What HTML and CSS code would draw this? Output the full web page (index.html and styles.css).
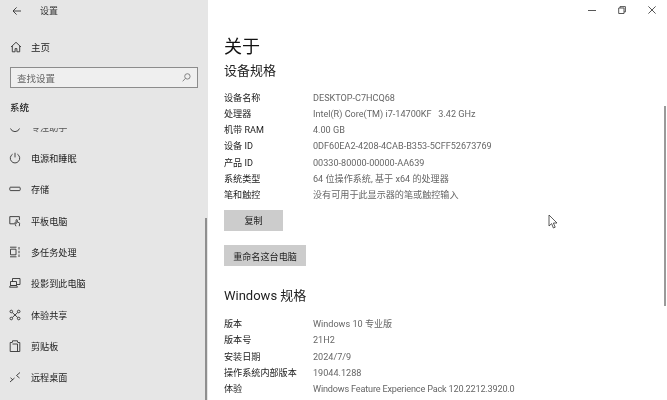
FILE: index.html
```html
<!DOCTYPE html>
<html lang="zh-CN">
<head>
<meta charset="utf-8">
<title>设置</title>
<link rel="stylesheet" href="styles.css">
</head>
<body>
<div class="window">
  <aside class="sidebar">
    <div class="titlebar">
      <svg class="back" width="10" height="10" viewBox="0 0 10 10"><path d="M9 5H1M4.600 1.400 1 5l3.600 3.600"/></svg>
      <span class="title">设置</span>
    </div>
    <div class="home">
      <svg class="icon" width="12" height="12" viewBox="0 0 12 12"><path d="M1 6 6 1.300 11 6M2.300 5v5.800h2.800V7.600h1.800v3.200h2.800V5"/></svg>
      <span>主页</span>
    </div>
    <div class="search">
      <span>查找设置</span>
      <svg class="icon" width="9" height="9" viewBox="0 0 9 9"><circle cx="5.400" cy="3.400" r="2.700"/><path d="M3.400 5.400.7 8.300"/></svg>
    </div>
    <div class="group">系统</div>
    <nav class="nav">
      <div class="clip">
        <svg class="icon" width="12" height="5" viewBox="0 0 12 5"><path d="M1.500 .5a4.800 4.800 0 0 0 9 0"/></svg>
        <span>专注助手</span>
      </div>
      <div class="item">
        <svg class="icon" width="12" height="12" viewBox="0 0 12 12"><path d="M3.600 2.200a4.700 4.700 0 1 0 4.800 0M6 .8v4.600"/></svg>
        <span>电源和睡眠</span>
      </div>
      <div class="item">
        <svg class="icon" width="12" height="12" viewBox="0 0 12 12"><rect x=".8" y="4.200" width="10.400" height="3.400" rx=".8"/></svg>
        <span>存储</span>
      </div>
      <div class="item">
        <svg class="icon" width="12" height="12" viewBox="0 0 12 12"><path d="M5 8.800H.8V1.600h9.600V5"/><path d="M7 11.200 5.600 8.400c-.3-.7.5-1 .9-.5l.6.8V5.200c0-.8 1.200-.8 1.200 0v2l1.600.4c.5.1.7.4.7.9l-.3 2.700"/></svg>
        <span>平板电脑</span>
      </div>
      <div class="item">
        <svg class="icon" width="12" height="12" viewBox="0 0 12 12"><path d="M1 1.200h6.500M1 10.800h6.500M1.500 3.200h5.500v5.600H1.500zM10 1v2.500M10 4.800v2.400M10 8.500V11"/></svg>
        <span>多任务处理</span>
      </div>
      <div class="item">
        <svg class="icon" width="12" height="12" viewBox="0 0 12 12"><path d="M3.500 4.500V1.500h7.500v6H8M1.500 4.500h6v4h-6zM.5 10.200h8l-1-1.700h-6z"/></svg>
        <span>投影到此电脑</span>
      </div>
      <div class="item">
        <svg class="icon" width="12" height="12" viewBox="0 0 12 12"><circle cx="2.300" cy="2.500" r="1.300"/><circle cx="9.700" cy="2.500" r="1.300"/><circle cx="2.300" cy="9.500" r="1.300"/><circle cx="9.700" cy="9.500" r="1.300"/><path d="M3.300 3.500 8.700 8.500M8.700 3.500 3.300 8.500"/></svg>
        <span>体验共享</span>
      </div>
      <div class="item">
        <svg class="icon" width="12" height="12" viewBox="0 0 12 12"><path d="M3 2.500H1.200v9h9.600v-9H9M3.500 2.500V.8h5v1.700M3.500 4h5v7.500"/></svg>
        <span>剪贴板</span>
      </div>
      <div class="item">
        <svg class="icon" width="12" height="12" viewBox="0 0 12 12"><path d="M1 11 5.500 7M1.500 6.800 4 9M11 1.500 7.500 4.500 10.500 7"/></svg>
        <span>远程桌面</span>
      </div>
    </nav>
    <div class="sidebar-thumb"></div>
  </aside>
  <main class="content">
    <div class="controls">
      <svg width="8" height="8" viewBox="0 0 8 8"><path d="M0 4.500h8"/></svg>
      <svg width="8" height="8" viewBox="0 0 8 8"><path d="M.7 2h5.300v5.500H.7zM2 2V.6h5.400v5.300H6"/></svg>
      <svg width="8" height="8" viewBox="0 0 8 8"><path d="M.4.400l7.200 7.200M7.600.400.4 7.600"/></svg>
    </div>
    <h1>关于</h1>
    <h2>设备规格</h2>
    <dl class="specs">
      <dt>设备名称</dt><dd>DESKTOP-C7HCQ68</dd>
      <dt>处理器</dt><dd>Intel(R) Core(TM) i7-14700KF&nbsp;&nbsp; 3.42 GHz</dd>
      <dt>机带 RAM</dt><dd>4.00 GB</dd>
      <dt>设备 ID</dt><dd>0DF60EA2-4208-4CAB-B353-5CFF52673769</dd>
      <dt>产品 ID</dt><dd>00330-80000-00000-AA639</dd>
      <dt>系统类型</dt><dd>64 位操作系统, 基于 x64 的处理器</dd>
      <dt>笔和触控</dt><dd>没有可用于此显示器的笔或触控输入</dd>
    </dl>
    <button class="btn copy">复制</button>
    <button class="btn rename">重命名这台电脑</button>
    <h2 class="win">Windows 规格</h2>
    <dl class="specs second">
      <dt>版本</dt><dd>Windows 10 专业版</dd>
      <dt>版本号</dt><dd>21H2</dd>
      <dt>安装日期</dt><dd>2024/7/9</dd>
      <dt>操作系统内部版本</dt><dd>19044.1288</dd>
      <dt>体验</dt><dd class="pack">Windows Feature Experience Pack 120.2212.3920.0</dd>
    </dl>
    <div class="main-thumb"></div>
    <svg class="cursor" width="10" height="15" viewBox="0 0 10 15"><path d="M1 1v11l2.600-2.400L5.400 14l1.800-.8-1.800-4.200H9z"/></svg>
  </main>
</div>
</body>
</html>
```

FILE: styles.css
```css
* { box-sizing: border-box; }
html, body { margin: 0; height: 100%; }
body {
  font-family: Roboto, "Noto Sans CJK SC", sans-serif;
  font-size: 9.1px;
  color: #222;
  overflow: hidden;
}
.window { display: flex; width: 667px; height: 400px; overflow: hidden; filter: blur(.3px); }
.sidebar {
  position: relative;
  flex: 0 0 208px;
  height: 400px;
  background: #e6e6e6;
  overflow: hidden;
}
svg { fill: none; stroke: #333; stroke-width: .9; flex: none; }
.titlebar { display: flex; align-items: center; height: 21px; padding-left: 12px; }
.title { margin-left: 18px; font-size: 9px; color: #333; }
.home { display: flex; align-items: center; gap: 9px; height: 20px; margin-top: 16px; padding-left: 10px; font-size: 9.5px; }
.search {
  display: flex; align-items: center; justify-content: space-between;
  width: 188px; height: 21px; margin: 10px 0 0 10px; padding: 0 6px;
  background: #efefef; border: 1px solid #8c8c8c; color: #666; font-size: 9.5px;
}
.search .icon { stroke: #777; }
.group { margin: 11px 0 0 10px; height: 18px; line-height: 18px; font-size: 9.5px; font-weight: 500; }
.nav { height: 283px; overflow: hidden; }
.clip {
  display: flex; gap: 10px; height: 14.400px; margin-top: 11px; padding-left: 9px;
  overflow: hidden; line-height: 0; color: #555;
}
.item { display: flex; align-items: center; gap: 10px; height: 31.300px; padding-left: 9px; }
.sidebar-thumb { position: absolute; right: 1px; top: 218px; bottom: 0; width: 2px; background: #8f8f8f; }
.content { position: relative; flex: 1; padding: 0 0 0 16px; background: #fff; overflow: hidden; }
.controls { display: flex; justify-content: flex-end; gap: 22px; height: 21px; padding: 6px 11px 0 0; margin-bottom: 15px; }
.controls svg { stroke: #444; }
h1 { margin: 0; height: 21px; line-height: 21px; font-size: 18px; font-weight: 400; color: #111; }
h2 { margin: 3px 0 0; height: 22px; line-height: 22px; font-size: 13px; font-weight: 400; color: #222; }
.specs { display: grid; grid-template-columns: 89px 1fr; grid-auto-rows: 16.300px; margin: 7.500px 0 0; line-height: 16.300px; white-space: nowrap; }
.second { margin-top: 9px; }
dt { color: #222; }
dd { margin: 0; color: #666; }
.pack { letter-spacing: -.17px; }
.btn {
  display: block; height: 21px; margin: 0; padding: 0; border: 0;
  background: #ccc; color: #222; font: inherit; text-align: center;
}
.copy { width: 59px; margin-top: 6px; }
.rename { width: 82px; margin-top: 14.500px; }
.win { margin-top: 19px; }
.main-thumb { position: absolute; right: 1px; top: 106px; height: 200px; width: 2px; background: #9a9a9a; }
.cursor { position: absolute; left: 340px; top: 214px; }
.cursor path { fill: #fff; stroke: #333; stroke-width: .8; }
```
